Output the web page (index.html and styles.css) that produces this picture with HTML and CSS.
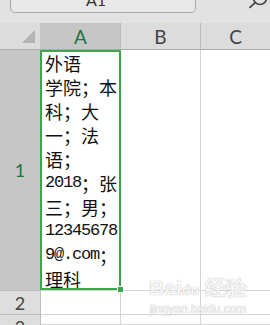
FILE: index.html
```html
<!DOCTYPE html>
<html>
<head>
<meta charset="utf-8">
<link rel="stylesheet" href="styles.css">
</head>
<body>
<div class="top">
  <div class="namebox">A1</div>
  <svg class="search" width="22" height="23" viewBox="0 0 22 23">
    <circle cx="12" cy="-2" r="6.5" fill="none" stroke="#444" stroke-width="1.6"/>
    <line x1="7.2" y1="2.6" x2="2" y2="7.4" stroke="#444" stroke-width="1.8" stroke-linecap="round"/>
  </svg>
</div>
<div class="sheet">
  <div class="corner">
    <svg width="41" height="26" viewBox="0 0 41 26"><polygon points="35,7 35,20 22,20" fill="#b4b4b4"/></svg>
  </div>
  <div class="colhead sel">A</div>
  <div class="colhead">B</div>
  <div class="colhead last">C</div>

  <div class="rowhead sel">1</div>
  <div class="cell a1">
    <div class="text">
      <div class="ln">外语</div>
      <div class="ln">学院；本</div>
      <div class="ln">科；大</div>
      <div class="ln">一；法</div>
      <div class="ln">语；</div>
      <div class="ln"><span class="lat">2018</span>；张</div>
      <div class="ln">三；男；</div>
      <div class="ln"><span class="lat">12345678</span></div>
      <div class="ln"><span class="lat">9@.com</span>；</div>
      <div class="ln">理科</div>
    </div>
    <div class="selection"><div class="handle"></div></div>
  </div>
  <div class="cell"></div>
  <div class="cell last"></div>

  <div class="rowhead">2</div>
  <div class="cell"></div>
  <div class="cell"></div>
  <div class="cell last"></div>

  <div class="rowhead r3">3</div>
  <div class="cell"></div>
  <div class="cell"></div>
  <div class="cell last"></div>

  <div class="watermark">
    <div class="wm-top">Bai<span class="paw">du</span> 经验</div>
    <div class="wm-url">jingyan.baidu.com</div>
  </div>
</div>
</body>
</html>
```
FILE: styles.css
```css
* { box-sizing: border-box; }
html, body {
  margin: 0;
  padding: 0;
  width: 270px;
  height: 325px;
  overflow: hidden;
  background: #e2e2e2;
}
.top {
  height: 23px;
  display: flex;
  align-items: flex-start;
  background: #e2e2e2;
}
.namebox {
  margin-top: -14px;
  margin-left: 10px;
  width: 186px;
  height: 27px;
  border: 1px solid #a9a9a9;
  border-radius: 5px;
  background: #e8e8e8;
  font-family: Lato, "Liberation Sans", sans-serif;
  font-size: 16px;
  line-height: 25px;
  color: #333;
  text-align: center;
  padding-right: 14px;
}
.search {
  margin-left: auto;
  display: block;
  overflow: visible;
}
.sheet {
  position: relative;
  display: grid;
  grid-template-columns: 41px 80px 80px 69px;
  grid-template-rows: 27px 241px 24px 10px;
  background: #ffffff;
}
.corner {
  background: #dcdcdc;
  border-bottom: 1px solid #ababab;
  border-right: 1px solid #c4c4c4;
}
.corner svg { display: block; }
.colhead {
  background: #dcdcdc;
  border-bottom: 1px solid #ababab;
  border-right: 1px solid #bdbdbd;
  display: flex;
  align-items: center;
  justify-content: center;
  font-family: Lato, "Liberation Sans", sans-serif;
  font-size: 19px;
  color: #444;
  padding-top: 1px;
}
.colhead.sel {
  background: #c6c6c6;
  color: #217346;
}
.colhead.last { border-right: none; }
.rowhead {
  background: #dedede;
  border-bottom: 1px solid #bdbdbd;
  border-right: 1px solid #bdbdbd;
  display: flex;
  align-items: center;
  justify-content: center;
  font-family: Lato, "Liberation Sans", sans-serif;
  font-size: 18px;
  color: #444;
}
.rowhead.sel {
  background: #c6c6c6;
  color: #217346;
}
.rowhead.r3 {
  align-items: flex-start;
  padding-top: 1px;
  border-bottom: none;
}
.cell {
  border-right: 1px solid #d4d4d4;
  border-bottom: 1px solid #d4d4d4;
  background: #fff;
}
.cell.last { border-right: none; }
.a1 { position: relative; }
.text {
  padding: 1px 0 0 4px;
  font-family: "Noto Sans CJK SC", "Liberation Serif", serif;
  font-size: 18px;
  color: #111;
  white-space: nowrap;
}
.ln {
  height: 24px;
  line-height: 24px;
  display: flex;
  align-items: center;
}
.lat {
  font-family: "Liberation Mono", monospace;
  font-size: 17px;
  letter-spacing: -1.2px;
  line-height: 24px;
}
.selection {
  position: absolute;
  left: -1px;
  top: 0;
  width: 81px;
  height: 240px;
  border: 2px solid #3ca64a;
}
.handle {
  position: absolute;
  right: -5px;
  bottom: -5px;
  width: 7px;
  height: 7px;
  background: #3ca64a;
  border: 1px solid #fff;
}
.watermark {
  position: absolute;
  left: 148px;
  top: 253px;
  width: 100px;
  font-family: "Liberation Sans", sans-serif;
  color: rgba(255,255,255,0.85);
  text-shadow: 0 0 1px #c4c4c4, 0 0 1px #c4c4c4;
  text-align: center;
  pointer-events: none;
}
.wm-top {
  font-size: 21px;
  font-weight: bold;
  line-height: 24px;
  white-space: nowrap;
}
.wm-top .paw { font-size: 14px; }
.wm-url {
  font-size: 12px;
  line-height: 14px;
  white-space: nowrap;
}
```
